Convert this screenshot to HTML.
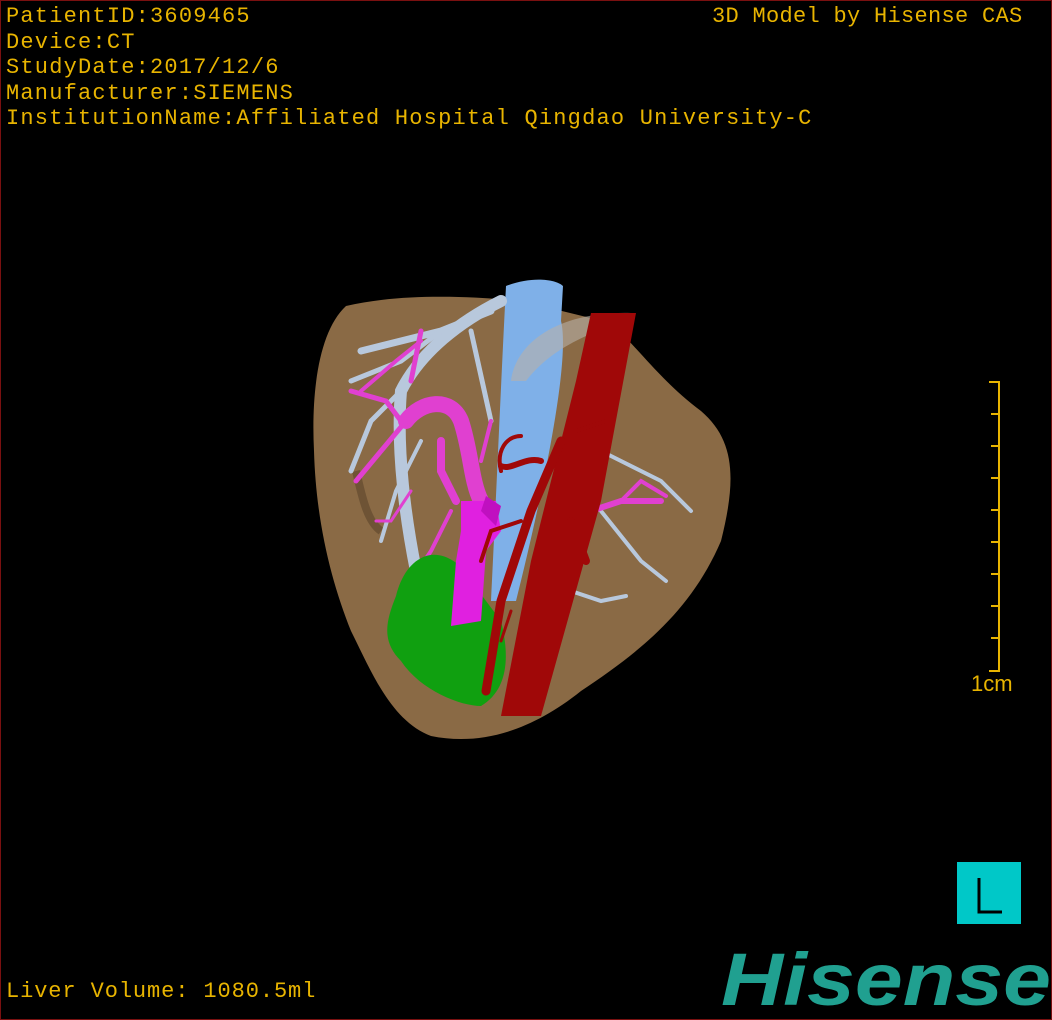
<!DOCTYPE html>
<html><head><meta charset="utf-8"><style>
html,body{margin:0;padding:0;background:#000;}
#c{position:relative;width:1050px;height:1018px;border:1px solid #7a1010;background:#000;overflow:hidden;}
.t{position:absolute;color:#e8b400;font-family:"Liberation Mono",monospace;font-size:22px;letter-spacing:1.2px;white-space:pre;line-height:25.5px;}
</style></head><body><div id="c">
<div class="t" style="left:5px;top:3px">PatientID:3609465
Device:CT
StudyDate:2017/12/6
Manufacturer:SIEMENS
InstitutionName:Affiliated Hospital Qingdao University-C</div>
<div class="t" style="left:711px;top:3px;letter-spacing:0.3px">3D Model by Hisense CAS</div>
<div class="t" style="left:5px;top:978px;letter-spacing:0.9px">Liver Volume: 1080.5ml</div>
<div class="t" style="left:970px;top:670px;font-family:'Liberation Sans',sans-serif;letter-spacing:0">1cm</div>
<svg width="1050" height="1018" style="position:absolute;left:0;top:0">
<g stroke="#e8b400" stroke-width="2">
<line x1="998" y1="380" x2="998" y2="671"/>
<line x1="988" y1="381" x2="998" y2="381"/><line x1="990" y1="413" x2="998" y2="413"/><line x1="990" y1="445" x2="998" y2="445"/><line x1="990" y1="477" x2="998" y2="477"/><line x1="990" y1="509" x2="998" y2="509"/><line x1="990" y1="541" x2="998" y2="541"/><line x1="990" y1="573" x2="998" y2="573"/><line x1="990" y1="605" x2="998" y2="605"/><line x1="990" y1="637" x2="998" y2="637"/><line x1="988" y1="670" x2="998" y2="670"/>
</g>
<path d="M345,305 C400,292 470,295 520,300 L610,322 C640,350 660,380 700,410 C735,440 735,480 720,540 C690,610 640,650 580,690 C530,730 480,745 430,735 C390,720 370,670 350,630 C330,580 315,520 313,450 C310,390 318,330 345,305Z" fill="#8a6a45"/>
<path d="M355,470 C360,490 365,520 380,530" stroke="#6e5335" stroke-width="8" fill="none"/>
<path d="M505,285 C530,275 555,278 562,285 L560,320 C570,360 540,500 515,600 L490,600 C495,500 500,380 505,285Z" fill="#7fb0e8"/>
<path d="M510,380 C515,340 560,310 630,312 C610,330 560,335 525,380Z" fill="#b8b0a8" opacity="0.6"/>
<g stroke="#b8c8dc" fill="none" stroke-linecap="round">
<path d="M500,300 C460,320 420,350 400,390 C395,450 405,520 415,570" stroke-width="12"/>
<path d="M490,310 L440,330 L360,350" stroke-width="7"/>
<path d="M440,330 L400,360 L350,380" stroke-width="5"/>
<path d="M400,390 L370,420 L350,470" stroke-width="5"/>
<path d="M420,440 L395,490 L380,540" stroke-width="4"/>
<path d="M600,450 L660,480 L690,510" stroke-width="4"/>
<path d="M600,510 L640,560 L665,580" stroke-width="4"/>
<path d="M570,590 L600,600 L625,595" stroke-width="4"/>
<path d="M470,330 L490,420" stroke-width="5"/>
</g>
<g stroke="#e040d0" fill="none" stroke-linecap="round">
<path d="M405,420 C420,400 450,395 460,420 C470,450 470,480 480,500" stroke-width="16"/>
<path d="M400,420 L385,400 L350,390" stroke-width="5"/>
<path d="M405,420 L380,450 L355,480" stroke-width="5"/>
<path d="M410,380 L420,330" stroke-width="5"/>
<path d="M420,340 L395,360 L360,390" stroke-width="4"/>
<path d="M440,440 L440,470 L455,500" stroke-width="8"/>
<path d="M590,510 L620,500 L660,500" stroke-width="6"/>
<path d="M620,500 L640,480 L665,495" stroke-width="4"/>
<path d="M410,490 L390,520 L375,520" stroke-width="3"/>
<path d="M450,510 L430,550 L410,580" stroke-width="4"/>
<path d="M490,420 L480,460" stroke-width="4"/>
</g>
<path d="M425,555 C440,550 460,560 470,580 L500,620 C510,660 505,690 480,705 C460,705 420,690 400,660 C380,640 385,620 395,595 C400,575 410,560 425,555Z" fill="#10a010"/>
<path d="M460,500 L495,500 L500,530 L485,550 L480,620 L450,625 L455,560 L460,530Z" fill="#e020e0"/>
<path d="M480,510 L485,495 L500,505 L495,525Z" fill="#c010c0"/>
<g fill="#a00808" stroke="#a00808" stroke-linecap="round">
<path d="M590,312 L635,312 L600,500 L540,715 L500,715 L530,560 L575,380Z" stroke="none"/>
<path d="M560,440 L530,510 L500,600 L485,690" fill="none" stroke-width="9"/>
<path d="M540,460 C525,455 510,470 500,465" fill="none" stroke-width="6"/>
<path d="M500,470 C495,450 505,435 520,435" fill="none" stroke-width="4"/>
<path d="M520,520 L490,530 L480,560" fill="none" stroke-width="4"/>
<path d="M510,610 L500,640" fill="none" stroke-width="3"/>
<path d="M575,430 L605,420" fill="none" stroke-width="4"/>
<path d="M570,520 L585,560" fill="none" stroke-width="8"/>
</g>
<rect x="956" y="861" width="64" height="62" fill="#00c8c8"/>
<path d="M978,877 V911 H1001" stroke="#000" stroke-width="3" fill="none"/>
<text x="720" y="1004" font-family="Liberation Sans,sans-serif" font-weight="bold" font-style="italic" font-size="74" fill="#20a090" textLength="330" lengthAdjust="spacingAndGlyphs">Hisense</text>
</svg>
</div></body></html>
